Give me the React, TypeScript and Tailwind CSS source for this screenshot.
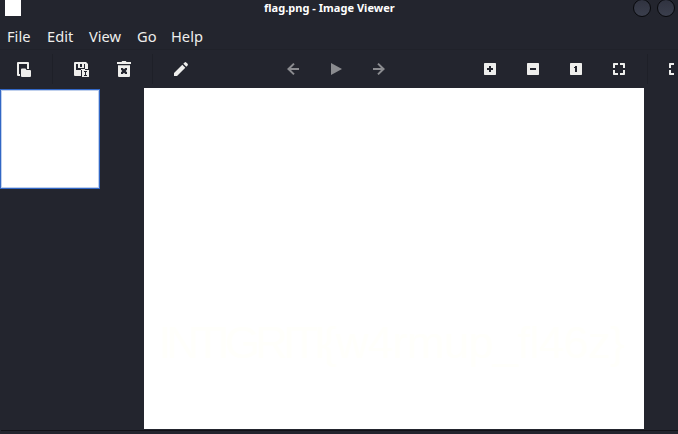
import type { ReactNode } from "react";

function Tool({ children, className = "" }: { children: ReactNode; className?: string }) {
  return (
    <svg viewBox="0 0 16 16" className={`size-4 shrink-0 fill-current ${className}`}>
      {children}
    </svg>
  );
}

function Separator({ className = "" }: { className?: string }) {
  return <div className={`h-[30px] w-px shrink-0 bg-[#1e2028] ${className}`} />;
}

const box = "M2.6 2h10.8l.6.6v10.8l-.6.6H2.6l-.6-.6V2.6z";
const corners = "M2.6 2H7v2H4v3H2V2.6zM9 2h4.4l.6.6V7h-2V4H9zM2 9h2v3h3v2H2.6l-.6-.6zM12 9h2v4.4l-.6.6H9v-2h3z";

export default function App() {
  return (
    <div className="flex h-[434px] w-[678px] flex-col overflow-hidden bg-[#23252e] font-['Noto_Sans',sans-serif] text-[#eeeeec]">
      <header className="grid h-[22px] shrink-0 grid-cols-[264px_1fr_45px] items-start">
        <div className="ml-[5px] h-4 w-4 bg-white" />
        <h1 className="h-4 whitespace-nowrap text-[11px] leading-4 font-bold tracking-[0.03px] text-white">flag.png - Image Viewer</h1>
        <div className="-mt-px flex gap-[6px]">
          <div className="size-[18px] shrink-0 rounded-full border border-[#08090c] bg-linear-to-b from-[#303340] to-[#3b3f4d]" />
          <div className="size-[18px] shrink-0 rounded-full border border-[#08090c] bg-linear-to-b from-[#303340] to-[#3b3f4d]" />
        </div>
      </header>

      <nav className="flex h-7 shrink-0 items-center gap-4 border-b border-[#20222a] pl-[7px] text-[14.67px] leading-[28px]">
        <span className="w-6">File</span>
        <span className="w-[26px]">Edit</span>
        <span className="w-8">View</span>
        <span className="w-[18px]">Go</span>
        <span>Help</span>
      </nav>

      <div className="flex h-[38px] shrink-0 items-center">
        <Tool className="ml-4">
          <path d="M1 2q0-1 1-1h10q1 0 1 1v6h-2V3H3v10h1v2H2q-1 0-1-1z" />
          <path d="M5 8.6q0-1 1-1h3.4L10.6 9H14q1 0 1 1v5q0 1-1 1H6q-1 0-1-1z" />
        </Tool>
        <Separator className="ml-5" />
        <Tool className="ml-5">
          <path fillRule="evenodd" d="M1 2q0-1 1-1h11l2 2v5H8v7H2q-1 0-1-1zM3 3v6h9V3h-1v4H5V3zM7 3v3h2V3z" />
          <path fillRule="evenodd" d="M9 9h7v7H9zM11 10v1h1v3h-1v1h3v-1h-1v-3h1v-1z" />
        </Tool>
        <Tool className="ml-[27px]">
          <path d="M1 1h4.500l.7-1h3.600l.7 1H15v2H1z" />
          <path fillRule="evenodd" d="M2 4.300h12v11l-.7.7H2.700l-.7-.7zM5 7v1.700L6.300 10 5 11.300V13h1.700L8 11.700 9.300 13H11v-1.700L9.700 10 11 8.700V7H9.300L8 8.300 6.700 7z" />
        </Tool>
        <Separator className="ml-5" />
        <Tool className="ml-5">
          <path d="M1 12 9.300 3.700l3 3L4 15H1zM10.300 2.700 11.600 1.400q.8-.7 1.600 0l1.400 1.400q.7.8 0 1.600l-1.300 1.300z" />
        </Tool>

        <div className="ml-[96px] flex shrink-0 gap-[27px] text-[#8b8c90]">
          <Tool><path d="M14 7v2H6l3.700 3.700L8.300 14 2 8l6.300-6 1.400 1.300L6 7z" /></Tool>
          <Tool><path d="M3 2v12l11-6z" /></Tool>
          <Tool><path d="M2 7v2h8l-3.700 3.700L7.700 14 14 8 7.700 2 6.300 3.300 10 7z" /></Tool>
        </div>

        <div className="ml-[95px] flex shrink-0 gap-[27px]">
          <Tool><path fillRule="evenodd" d={box + "M7 5v2H5v2h2v2h2V9h2V7H9V5z"} /></Tool>
          <Tool><path fillRule="evenodd" d={box + "M5 7v2h6V7z"} /></Tool>
          <Tool><path fillRule="evenodd" d={box + "M7 5v1H6v1h1v4h2V5z"} /></Tool>
          <Tool><path d={corners} /></Tool>
        </div>
        <Separator className="ml-5" />
        <div className="ml-5 w-[6px] shrink-0 overflow-hidden">
          <Tool className="-ml-px"><path d={corners} /></Tool>
        </div>
      </div>

      <main className="flex h-[341px] shrink-0">
        <aside className="w-[144px] shrink-0 pt-px">
          <div className="h-[100px] w-[100px] border border-[#3267c5] bg-white">
            <div className="h-full w-full border border-[#c0d0ec]" />
          </div>
        </aside>
        <section className="w-[500px] shrink-0 overflow-hidden bg-white pt-[230px] pl-[15px]">
          <p className="whitespace-nowrap font-['Liberation_Sans',sans-serif] text-[45px] leading-[50px] text-[#fffffb]">
            <span className="tracking-[-4.7px]">INTIGRITI</span>
            <span className="tracking-[-0.5px]">{"{w4rmup_fl46z}"}</span>
          </p>
        </section>
      </main>
      <footer className="ml-px mt-[1px] h-1 shrink-0 border-t border-[#111217]" />
    </div>
  );
}
